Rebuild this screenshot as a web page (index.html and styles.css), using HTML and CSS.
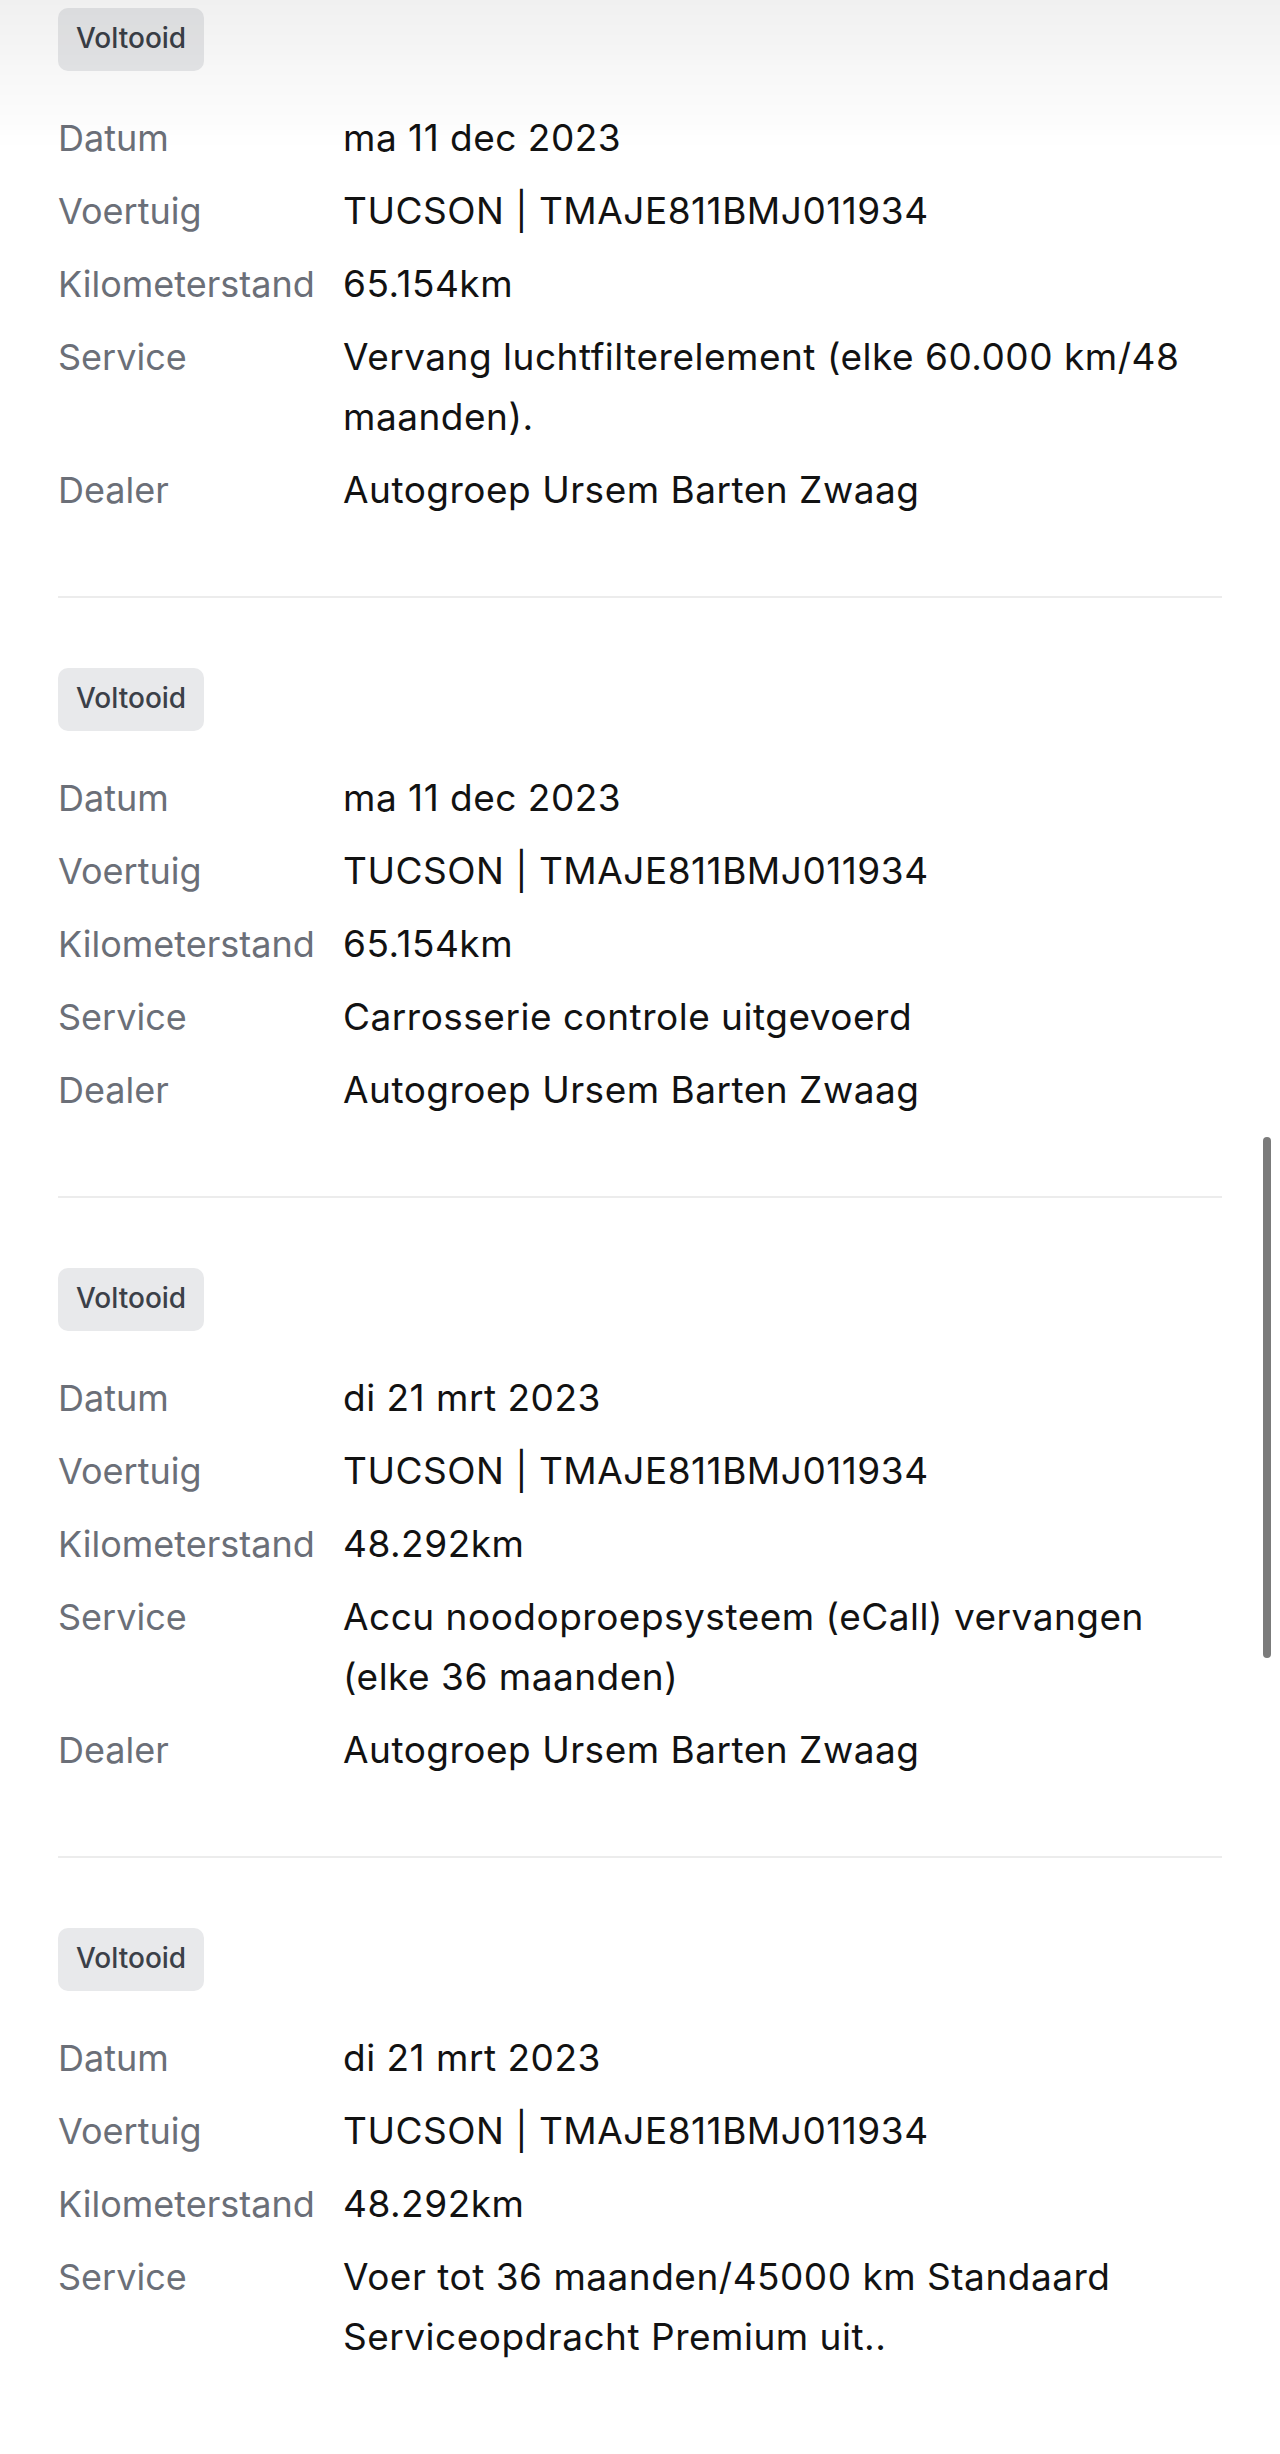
FILE: index.html
```html
<!DOCTYPE html>
<html lang="nl">
<head>
<meta charset="utf-8">
<title>Onderhoudshistorie</title>
<link rel="stylesheet" href="styles.css">
</head>
<body>
<main class="history">
  <section class="record">
    <span class="badge">Voltooid</span>
    <dl class="details">
      <dt>Datum</dt><dd>ma 11 dec 2023</dd>
      <dt>Voertuig</dt><dd>TUCSON | TMAJE811BMJ011934</dd>
      <dt>Kilometerstand</dt><dd>65.154km</dd>
      <dt>Service</dt><dd>Vervang luchtfilterelement (elke 60.000 km/48 maanden).</dd>
      <dt>Dealer</dt><dd>Autogroep Ursem Barten Zwaag</dd>
    </dl>
  </section>
  <section class="record">
    <span class="badge">Voltooid</span>
    <dl class="details">
      <dt>Datum</dt><dd>ma 11 dec 2023</dd>
      <dt>Voertuig</dt><dd>TUCSON | TMAJE811BMJ011934</dd>
      <dt>Kilometerstand</dt><dd>65.154km</dd>
      <dt>Service</dt><dd>Carrosserie controle uitgevoerd</dd>
      <dt>Dealer</dt><dd>Autogroep Ursem Barten Zwaag</dd>
    </dl>
  </section>
  <section class="record">
    <span class="badge">Voltooid</span>
    <dl class="details">
      <dt>Datum</dt><dd>di 21 mrt 2023</dd>
      <dt>Voertuig</dt><dd>TUCSON | TMAJE811BMJ011934</dd>
      <dt>Kilometerstand</dt><dd>48.292km</dd>
      <dt>Service</dt><dd>Accu noodoproepsysteem (eCall) vervangen (elke 36 maanden)</dd>
      <dt>Dealer</dt><dd>Autogroep Ursem Barten Zwaag</dd>
    </dl>
  </section>
  <section class="record">
    <span class="badge">Voltooid</span>
    <dl class="details">
      <dt>Datum</dt><dd>di 21 mrt 2023</dd>
      <dt>Voertuig</dt><dd>TUCSON | TMAJE811BMJ011934</dd>
      <dt>Kilometerstand</dt><dd>48.292km</dd>
      <dt>Service</dt><dd>Voer tot 36 maanden/45000 km Standaard Serviceopdracht Premium uit..</dd>
    </dl>
  </section>
</main>
<div class="top-fade"></div>
<div class="scroll-thumb"></div>
</body>
</html>
```
FILE: styles.css
```css
html, body {
  margin: 0;
  padding: 0;
  background: #ffffff;
}

body {
  font-family: Inter, "Noto Sans", "DejaVu Sans", sans-serif;
  color: #121212;
}

.history {
  padding: 0 58px;
}

.record {
  padding: 70px 0 76px;
  border-bottom: 2px solid #ececec;
}

.record:first-child {
  padding-top: 8px;
}

.record:last-child {
  border-bottom: none;
}

.badge {
  display: inline-block;
  height: 63px;
  line-height: 61px;
  padding: 0 18px;
  border-radius: 10px;
  background: #e8e9eb;
  color: #3b4048;
  font-size: 28px;
  font-weight: 500;
}

.details {
  display: grid;
  grid-template-columns: 285px 1fr;
  row-gap: 13px;
  margin: 37px 0 0;
  font-size: 36px;
  line-height: 60px;
}

.details dt {
  color: #6b6f78;
}

.details dd {
  margin: 0;
  color: #121212;
  font-size: 37px;
  letter-spacing: 0.5px;
}

.top-fade {
  position: fixed;
  top: 0;
  left: 0;
  right: 0;
  height: 150px;
  background: linear-gradient(to bottom, rgba(0, 0, 0, 0.06), rgba(0, 0, 0, 0));
  pointer-events: none;
}

.scroll-thumb {
  position: fixed;
  left: 1263px;
  top: 1137px;
  width: 8px;
  height: 521px;
  border-radius: 4px;
  background: #7b7b7b;
}
```
